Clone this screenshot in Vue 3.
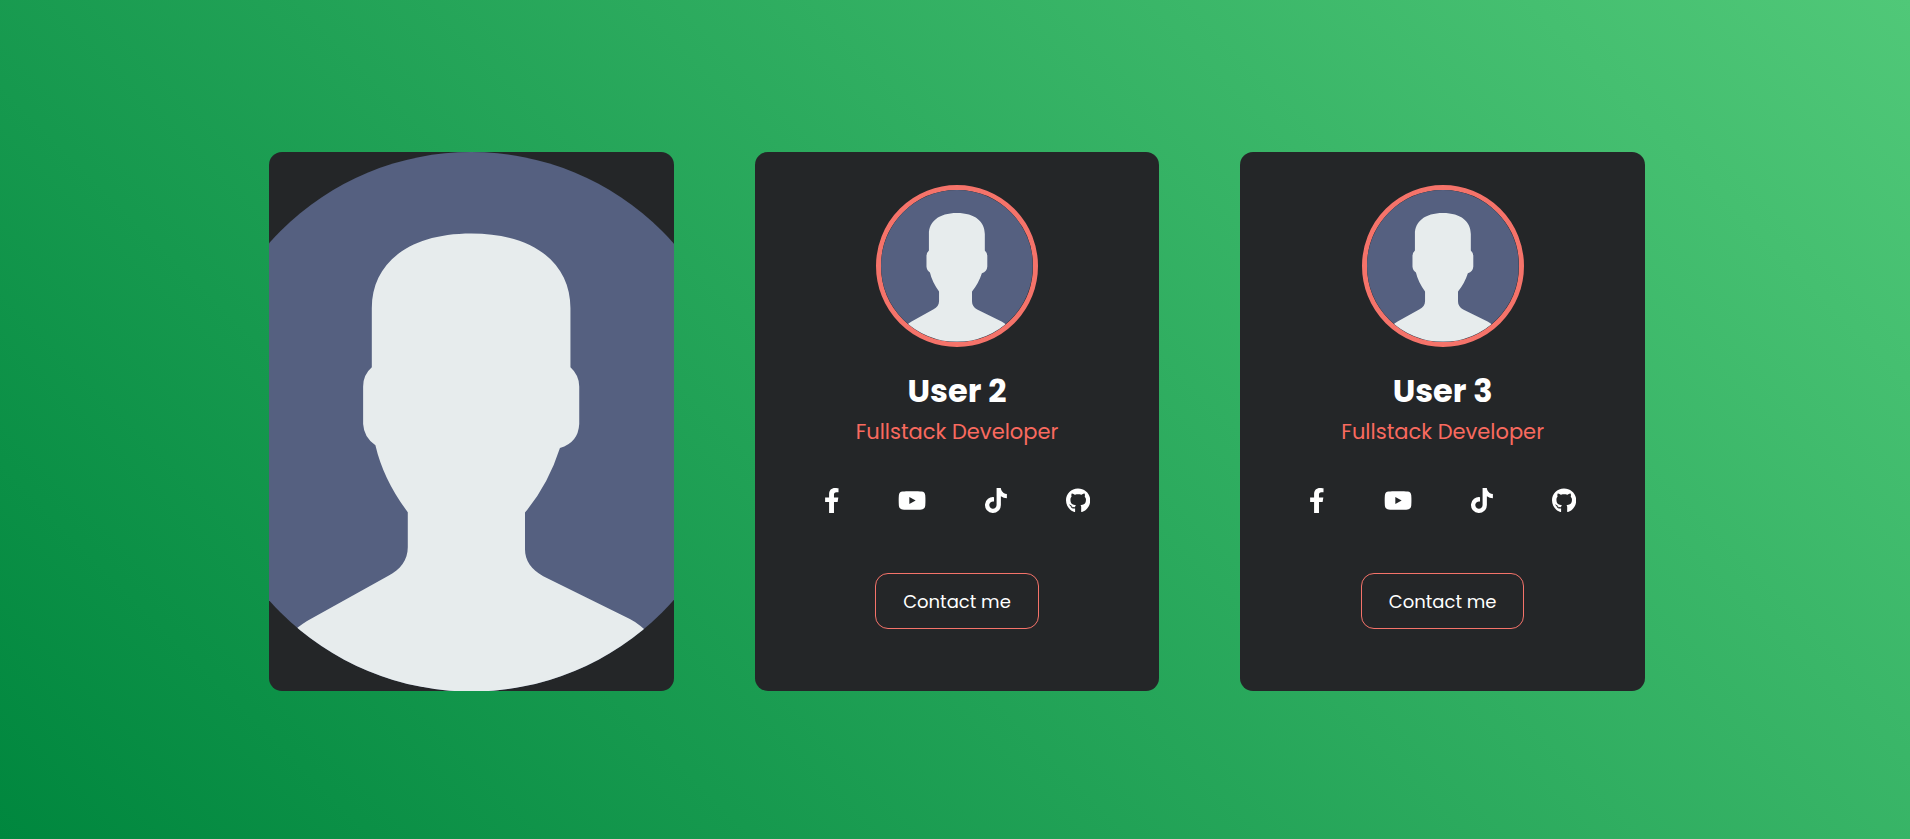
<script setup>
const cards = [
  { id: 1, name: 'User 1', cover: true },
  { id: 2, name: 'User 2', role: 'Fullstack Developer' },
  { id: 3, name: 'User 3', role: 'Fullstack Developer' },
]

const icons = [
  {
    label: 'Facebook',
    width: 320,
    path: 'M279.14 288l14.22-92.66h-88.91v-60.13c0-25.35 12.42-50.06 52.24-50.06h40.42V6.26S260.43 0 225.36 0c-73.22 0-121.08 44.38-121.08 124.72v70.62H22.89V288h81.39v224h100.17V288z',
  },
  {
    label: 'YouTube',
    width: 576,
    path: 'M288 66C190 66 130 69 92 73C48 78 22 102 18 146Q14 190 14 256T18 366C22 410 48 434 92 439C130 443 190 446 288 446S446 443 484 439C528 434 554 410 558 366Q562 322 562 256T558 146C554 102 528 78 484 73C446 69 386 66 288 66ZM232 184L362 256L232 328Z',
  },
  {
    label: 'TikTok',
    width: 448,
    path: 'M448 209.91a210.06 210.06 0 0 1-122.77-39.25v178.72A162.55 162.55 0 1 1 185 188.31v89.89a74.62 74.62 0 1 0 52.23 71.18V0h88a121.18 121.18 0 0 0 1.86 22.17A122.18 122.18 0 0 0 381 102.39a121.43 121.43 0 0 0 67 20.14z',
  },
  {
    label: 'GitHub',
    width: 496,
    path: 'M165.9 397.4c0 2-2.3 3.6-5.2 3.6-3.3.3-5.6-1.3-5.6-3.6 0-2 2.3-3.6 5.2-3.6 3-.3 5.6 1.3 5.6 3.6zm-31.1-4.5c-.7 2 1.3 4.3 4.3 4.9 2.6 1 5.6 0 6.2-2s-1.3-4.3-4.3-5.2c-2.6-.7-5.5.3-6.2 2.3zm44.2-1.7c-2.9.7-4.9 2.6-4.6 4.9.3 2 2.9 3.3 5.9 2.6 2.9-.7 4.9-2.6 4.6-4.6-.3-1.9-3-3.2-5.9-2.9zM244.8 8C106.1 8 0 113.3 0 252c0 110.9 69.8 205.8 169.5 239.2 12.8 2.3 17.3-5.6 17.3-12.1 0-6.2-.3-40.4-.3-61.4 0 0-70 15-84.7-29.8 0 0-11.4-29.1-27.8-36.6 0 0-22.9-15.7 1.6-15.4 0 0 24.9 2 38.6 25.8 21.9 38.6 58.6 27.5 72.9 20.9 2.3-16 8.8-27.1 16-33.7-55.9-6.2-112.3-14.3-112.3-110.5 0-27.5 7.6-41.3 23.6-58.9-2.6-6.5-11.1-33.3 2.6-67.9 20.9-6.5 69 27 69 27 20-5.6 41.5-8.5 62.8-8.5s42.8 2.9 62.8 8.5c0 0 48.1-33.6 69-27 13.7 34.7 5.2 61.4 2.6 67.9 16 17.7 25.8 31.5 25.8 58.9 0 96.5-58.9 104.2-114.8 110.5 9.2 7.9 17 22.9 17 46.4 0 33.7-.3 75.4-.3 83.6 0 6.5 4.6 14.4 17.3 12.1C428.2 457.8 496 362.9 496 252 496 113.3 383.5 8 244.8 8zM97.2 352.9c-1.3 1-1 3.3.7 5.2 1.6 1.6 3.9 2.3 5.2 1 1.3-1 1-3.3-.7-5.2-1.6-1.6-3.9-2.3-5.2-1zm-10.8-8.1c-.7 1.3.3 2.9 2.3 3.9 1.6 1 3.6.7 4.3-.7.7-1.3-.3-2.9-2.3-3.9-2-.6-3.6-.3-4.3.7zm32.4 35.6c-1.6 1.3-1 4.3 1.3 6.2 2.3 2.3 5.2 2.6 6.5 1 1.3-1.3.7-4.3-1.3-6.2-2.2-2.3-5.2-2.6-6.5-1zm-11.4-14.7c-1.6 1-1.6 3.6 0 5.9 1.6 2.3 4.3 3.3 5.6 2.3 1.6-1.3 1.6-3.9 0-6.2-1.4-2.3-4-3.3-5.6-2z',
  },
]
</script>

<template>
  <main class="page">
    <section class="cards">
      <article v-for="card in cards" :key="card.id" class="card" :aria-label="card.name">
        <div :class="card.cover ? 'cover' : 'avatar'">
          <svg class="portrait" viewBox="0 0 540 540" preserveAspectRatio="xMidYMid slice" aria-hidden="true">
            <defs>
              <clipPath :id="'disc-' + card.id"><circle cx="270" cy="270" r="270" /></clipPath>
            </defs>
            <g :clip-path="`url(#disc-${card.id})`">
              <rect width="540" height="540" fill="#556080" />
              <path
                fill="#e7eced"
                d="M270 81.6C205 81.6 170.4 113 170.4 156.3V215.5Q161.7 223 161.7 234.8V272.3Q162.5 286 174 293.4Q182 328 206.4 360.5V395.5C206.4 408 199 418 187 424.1L108.7 467.7Q102 471 90 481V540H450V484Q438 472 428.7 467.3L342 424.5C330 418 323.7 409 323.7 397.3V360.9Q347 333 358.7 296.3Q377 291 378 272.3V234.8Q378 223.5 369.2 215.5V156.3C369.2 113 335 81.6 270 81.6Z"
              />
            </g>
          </svg>
        </div>
        <template v-if="!card.cover">
          <h2 class="name">{{ card.name }}</h2>
          <p class="role">{{ card.role }}</p>
          <nav class="social" :aria-label="card.name + ' social links'">
            <a v-for="icon in icons" :key="icon.label" href="#" class="social-link" :aria-label="icon.label">
              <svg class="icon" :viewBox="`0 0 ${icon.width} 512`" aria-hidden="true">
                <path :d="icon.path" fill="currentColor" fill-rule="evenodd" />
              </svg>
            </a>
          </nav>
          <button type="button" class="contact">Contact me</button>
        </template>
      </article>
    </section>
  </main>
</template>

<style>
body {
  margin: 0;
}
</style>

<style scoped>
.page {
  box-sizing: border-box;
  min-height: 100vh;
  padding: 4px 0 0 4px;
  display: flex;
  align-items: center;
  justify-content: center;
  background: linear-gradient(45deg, #00873e, #50c878);
  font-family: Poppins, Inter, "Open Sans", sans-serif;
  font-feature-settings: "cv11";
}

.cards {
  width: 100%;
  max-width: 1376px;
  display: grid;
  grid-template-columns: repeat(3, 1fr);
  gap: 81px;
}

.card {
  box-sizing: border-box;
  aspect-ratio: 3 / 4;
  display: flex;
  flex-direction: column;
  align-items: center;
  border-radius: 13px;
  overflow: hidden;
  background: #242628;
  color: #fff;
}

.cover {
  width: 100%;
  height: 100%;
}

.portrait {
  display: block;
  width: 100%;
  height: 100%;
}

.avatar {
  box-sizing: border-box;
  width: 40%;
  aspect-ratio: 1;
  margin-top: 33px;
  border: 5px solid #f5736a;
  border-radius: 50%;
}

.name {
  margin: 20px 0 0;
  font-size: 32px;
  line-height: 48px;
  font-weight: 700;
}

.role {
  margin: 0;
  font-size: 21px;
  line-height: 34px;
  color: #f96a5f;
}

.social {
  display: flex;
  gap: 59px;
  margin-top: 39px;
}

.social-link {
  display: flex;
  color: #fff;
}

.icon {
  display: block;
  height: 25px;
}

.contact {
  margin-top: 60px;
  padding: 16px 27px 14px;
  border: 1px solid #f5736a;
  border-radius: 13px;
  background: transparent;
  color: #fff;
  font: inherit;
  font-feature-settings: inherit;
  font-size: 18px;
  line-height: 24px;
  cursor: pointer;
}
</style>
